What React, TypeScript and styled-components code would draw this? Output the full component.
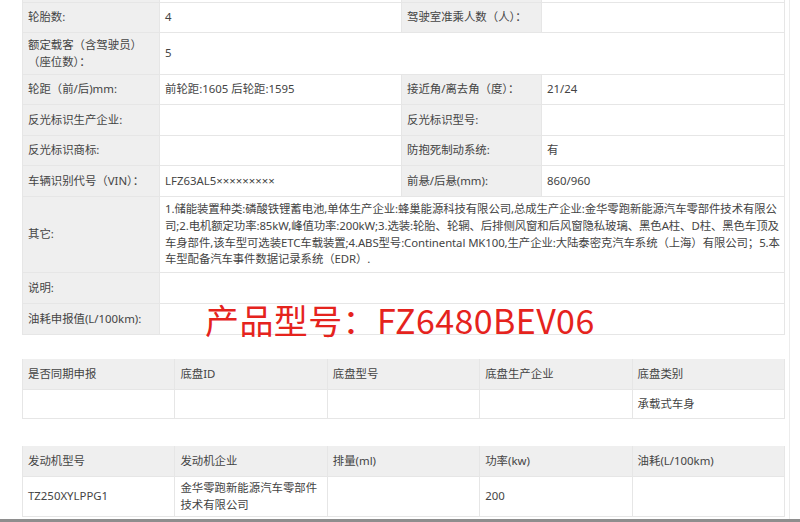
import styled, { createGlobalStyle } from "styled-components";

const GlobalStyle = createGlobalStyle`
    html, body {
        margin: 0;
        padding: 0;
        background: #ffffff;
    }
    body {
        font-family: "Noto Sans", "Noto Sans CJK SC", sans-serif;
        font-size: 11.4px;
        color: #444444;
    }
`;

const Screen = styled.div`
    width: 800px;
    height: 522px;
    overflow: hidden;
    display: flex;
    flex-direction: column;
`;

const Page = styled.div`
    width: 790px;
    height: 519px;
    overflow: hidden;
    box-sizing: border-box;
    border-right: 1px solid #ececec;
    padding: 0 4px 0 22px;
    display: flex;
    flex-direction: column;
`;

const BottomEdge = styled.div`
    height: 3px;
    background: #8e8e8e;
`;

const InfoGrid = styled.div`
    display: grid;
    grid-template-columns: 137px 242px 140px 243px;
    grid-template-rows: 30px 30px 42px 30px 31px 30px 31px 76px 31px 31px;
    border-left: 1px solid #e6e6e6;
    margin-top: -27px;
`;

const ListGrid = styled.div<{ $rows: string; $gap: number }>`
    display: grid;
    grid-template-columns: repeat(5, 1fr);
    grid-template-rows: ${(p) => p.$rows};
    border-left: 1px solid #e6e6e6;
    margin-top: ${(p) => p.$gap}px;
`;

const Cell = styled.div<{ $label?: boolean; $span?: number }>`
    grid-column: span ${(p) => p.$span ?? 1};
    display: flex;
    align-items: center;
    padding: 0 5px;
    min-width: 0;
    position: relative;
    background: ${(p) => (p.$label ? "#efefef" : "#ffffff")};
    border-right: 1px solid #e6e6e6;
    border-bottom: 1px solid #e6e6e6;
    line-height: 16.7px;
`;

const Lines = styled.div<{ $tight?: boolean }>`
    display: flex;
    flex-direction: column;
    letter-spacing: ${(p) => (p.$tight ? "-0.09px" : "normal")};
`;

const Line = styled.span`
    white-space: nowrap;
`;

const Stamp = styled.span`
    position: absolute;
    left: 45px;
    top: -1px;
    z-index: 2;
    white-space: nowrap;
    font-family: "Noto Sans CJK SC", "Noto Sans", sans-serif;
    font-size: 34px;
    line-height: 34px;
    letter-spacing: 0.4px;
    color: #e5231d;
`;

const otherLines = [
    "1.储能装置种类:磷酸铁锂蓄电池,单体生产企业:蜂巢能源科技有限公司,总成生产企业:金华零跑新能源汽车零部件技术有限公",
    "司;2.电机额定功率:85kW,峰值功率:200kW;3.选装:轮胎、轮辋、后排侧风窗和后风窗隐私玻璃、黑色A柱、D柱、黑色车顶及",
    "车身部件,该车型可选装ETC车载装置;4.ABS型号:Continental MK100,生产企业:大陆泰密克汽车系统（上海）有限公司；5.本",
    "车型配备汽车事件数据记录系统（EDR）.",
];

const pairRows: [string, string, string, string][] = [
    ["轮胎数:", "4", "驾驶室准乘人数（人）：", ""],
];

const pairRows2: [string, string, string, string][] = [
    ["轮距（前/后)mm:", "前轮距:1605 后轮距:1595", "接近角/离去角（度）：", "21/24"],
    ["反光标识生产企业:", "", "反光标识型号:", ""],
    ["反光标识商标:", "", "防抱死制动系统:", "有"],
    ["车辆识别代号（VIN）：", "LFZ63AL5×××××××××", "前悬/后悬(mm):", "860/960"],
];

const chassisHead = ["是否同期申报", "底盘ID", "底盘型号", "底盘生产企业", "底盘类别"];
const chassisRow = ["", "", "", "", "承载式车身"];

const engineHead = ["发动机型号", "发动机企业", "排量(ml)", "功率(kw)", "油耗(L/100km)"];
const engineRow = ["TZ250XYLPPG1", "金华零跑新能源汽车零部件技术有限公司", "", "200", ""];

const PairRow = ({ row }: { row: [string, string, string, string] }) => (
    <>
        <Cell $label>{row[0]}</Cell>
        <Cell>{row[1]}</Cell>
        <Cell $label>{row[2]}</Cell>
        <Cell>{row[3]}</Cell>
    </>
);

export default function App() {
    return (
        <Screen>
            <GlobalStyle />
            <Page>
                <InfoGrid>
                    <Cell $label />
                    <Cell />
                    <Cell $label />
                    <Cell />

                    {pairRows.map((r) => (
                        <PairRow key={r[0]} row={r} />
                    ))}

                    <Cell $label>
                        <Lines>
                            <Line>额定载客（含驾驶员）</Line>
                            <Line>（座位数）：</Line>
                        </Lines>
                    </Cell>
                    <Cell $span={3}>5</Cell>

                    {pairRows2.map((r) => (
                        <PairRow key={r[0]} row={r} />
                    ))}

                    <Cell $label>其它:</Cell>
                    <Cell $span={3}>
                        <Lines $tight>
                            {otherLines.map((l) => (
                                <Line key={l}>{l}</Line>
                            ))}
                        </Lines>
                    </Cell>

                    <Cell $label>说明:</Cell>
                    <Cell $span={3} />

                    <Cell $label>油耗申报值(L/100km):</Cell>
                    <Cell $span={3}>
                        <Stamp>产品型号：FZ6480BEV06</Stamp>
                    </Cell>
                </InfoGrid>

                <ListGrid $rows="31px 29px" $gap={24}>
                    {chassisHead.map((h) => (
                        <Cell key={h} $label>{h}</Cell>
                    ))}
                    {chassisRow.map((v, i) => (
                        <Cell key={i}>{v}</Cell>
                    ))}
                </ListGrid>

                <ListGrid $rows="31px 40px" $gap={27}>
                    {engineHead.map((h) => (
                        <Cell key={h} $label>{h}</Cell>
                    ))}
                    {engineRow.map((v, i) => (
                        <Cell key={i}>{v}</Cell>
                    ))}
                </ListGrid>
            </Page>
            <BottomEdge />
        </Screen>
    );
}
